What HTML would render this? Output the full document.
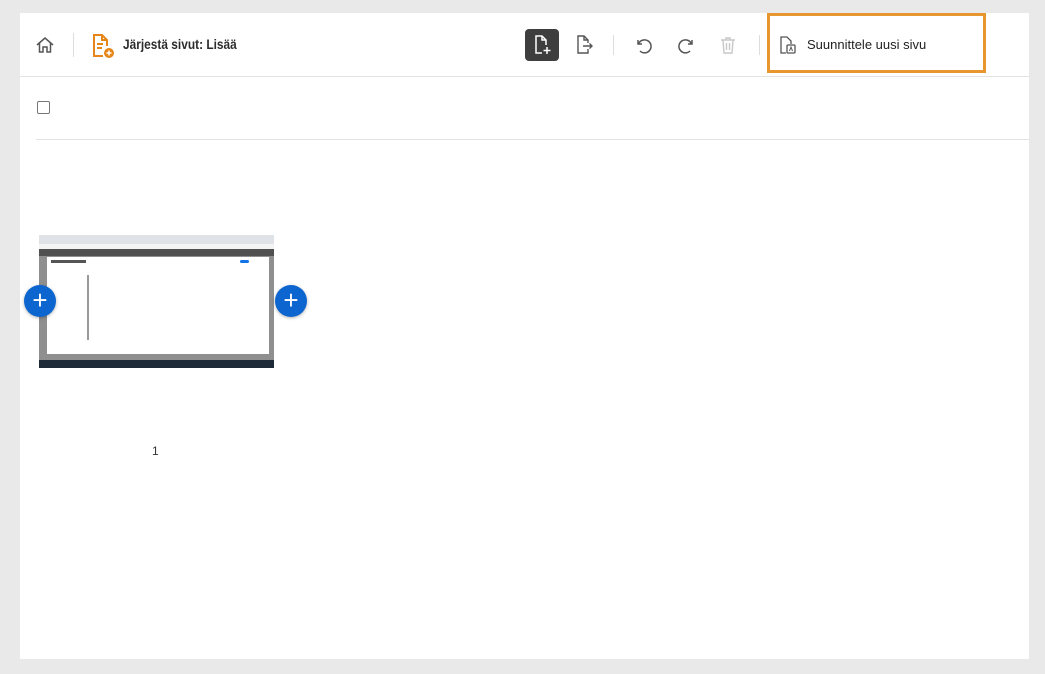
<!DOCTYPE html>
<html><head><meta charset="utf-8"><style>
body{margin:0;width:1045px;height:674px;background:#e9e9e9;font-family:"Liberation Sans",sans-serif;position:relative;overflow:hidden}
.panel{position:absolute;left:20px;top:13px;width:1009px;height:646px;background:#fff}
.abs{position:absolute}
.hl{position:absolute;height:1px;background:#e3e3e3}
.vl{position:absolute;width:1px;background:#ddd}
.plus{position:absolute;width:32px;height:32px;border-radius:50%;background:#0d66d0;color:#fff;font-size:26px;line-height:31px;text-align:center;box-shadow:0 1px 3px rgba(0,0,0,.3)}
</style></head><body>
<div class="panel"></div>
<div class="hl" style="left:20px;top:76px;width:1009px"></div>
<div class="hl" style="left:36px;top:139px;width:993px"></div>
<svg class="abs" style="left:35px;top:35px" width="20" height="20" viewBox="0 0 20 20" fill="none" stroke="#555" stroke-width="1.5"><path d="M2 10 L10 3 L18 10 M4.5 8 V17 H8 V12 H12 V17 H15.5 V8"/></svg>
<div class="vl" style="left:73px;top:33px;height:24px"></div>
<svg class="abs" style="left:91px;top:33px" width="24" height="26" viewBox="0 0 24 26" fill="none" stroke="#e68619" stroke-width="2"><path d="M12 23 H3 V2 H11 L16 7 V13"/><path d="M11 2 V7 H16"/><path d="M6 11 H12 M6 15 H11"/><circle cx="18" cy="20" r="5" fill="#e68619" stroke="none"/><path d="M18 17.5 V22.5 M15.5 20 H20.5" stroke="#fff" stroke-width="1.5"/></svg>
<div class="abs" style="left:123px;top:36px;font-size:14px;font-weight:bold;color:#2c2c2c;transform:scaleX(0.85);transform-origin:left">Järjestä sivut: Lisää</div>
<div class="abs" style="left:525px;top:29px;width:34px;height:32px;background:#3e3e3e;border-radius:4px"></div>
<svg class="abs" style="left:533px;top:34px" width="20" height="22" viewBox="0 0 20 22" fill="none" stroke="#fff" stroke-width="1.5"><path d="M9 19 H3 V2 H9 L13 6 V11"/><path d="M9 2 V6 H13"/><path d="M14 13 V20 M10.5 16.5 H17.5"/></svg>
<svg class="abs" style="left:575px;top:34px" width="20" height="22" viewBox="0 0 20 22" fill="none" stroke="#555" stroke-width="1.4"><path d="M13 15 V19 H3 V2 H9 L13 6 V9"/><path d="M9 2 V6 H13"/><path d="M8 12 H17 M14.5 9.5 L17 12 L14.5 14.5"/></svg>
<div class="vl" style="left:613px;top:35px;height:20px"></div>
<svg class="abs" style="left:634px;top:36px" width="20" height="20" viewBox="0 0 20 20" fill="none" stroke="#555" stroke-width="1.5"><path d="M4 4 V8 H8"/><path d="M4.5 8 A6.5 6.5 0 1 1 6 15"/></svg>
<svg class="abs" style="left:676px;top:36px" width="20" height="20" viewBox="0 0 20 20" fill="none" stroke="#555" stroke-width="1.5"><path d="M16 4 V8 H12"/><path d="M15.5 8 A6.5 6.5 0 1 0 14 15"/></svg>
<svg class="abs" style="left:718px;top:35px" width="20" height="20" viewBox="0 0 20 20" fill="none" stroke="#c8c8c8" stroke-width="1.4"><path d="M3 5 H17 M8 5 V3 H12 V5 M5 5 L6 18 H14 L15 5 M8.5 8 V15 M11.5 8 V15"/></svg>
<div class="vl" style="left:759px;top:35px;height:20px"></div>
<div class="abs" style="left:767px;top:13px;width:213px;height:54px;border:3px solid #e8962f"></div>
<svg class="abs" style="left:779px;top:35px" width="20" height="20" viewBox="0 0 20 20" fill="none" stroke="#555" stroke-width="1.3"><path d="M7 18 H2 V2 H8 L12 6 V9"/><rect x="8" y="10" width="8" height="8" rx="1"/><path d="M10.5 16 L12 12 L13.5 16" stroke-width="1"/></svg>
<div class="abs" style="left:807px;top:37px;font-size:13px;color:#222">Suunnittele uusi sivu</div>
<div class="abs" style="left:37px;top:101px;width:11px;height:11px;border:1.5px solid #777;border-radius:2px"></div>
<div class="abs" style="left:39px;top:235px;width:235px;height:133px;background:#8f8f8f">
 <div class="abs" style="left:0;top:0;width:235px;height:9px;background:#dfe3e8"></div>
 <div class="abs" style="left:0;top:9px;width:235px;height:5px;background:#f4f4f4"></div>
 <div class="abs" style="left:0;top:14px;width:235px;height:7px;background:#505050"></div>
 <div class="abs" style="left:8px;top:22px;width:222px;height:97px;background:#fff"></div>
 <div class="abs" style="left:12px;top:25px;width:35px;height:3px;background:#555"></div>
 <div class="abs" style="left:201px;top:25px;width:9px;height:3px;background:#1473e6;border-radius:2px"></div>
 <div class="abs" style="left:48px;top:40px;width:2px;height:65px;background:#999"></div>
 <div class="abs" style="left:0;top:125px;width:235px;height:8px;background:#1e2a38"></div>
</div>
<div class="plus" style="left:24px;top:285px">+</div>
<div class="plus" style="left:275px;top:285px">+</div>
<div class="abs" style="left:152px;top:444px;font-size:12px;color:#333">1</div>
</body></html>
